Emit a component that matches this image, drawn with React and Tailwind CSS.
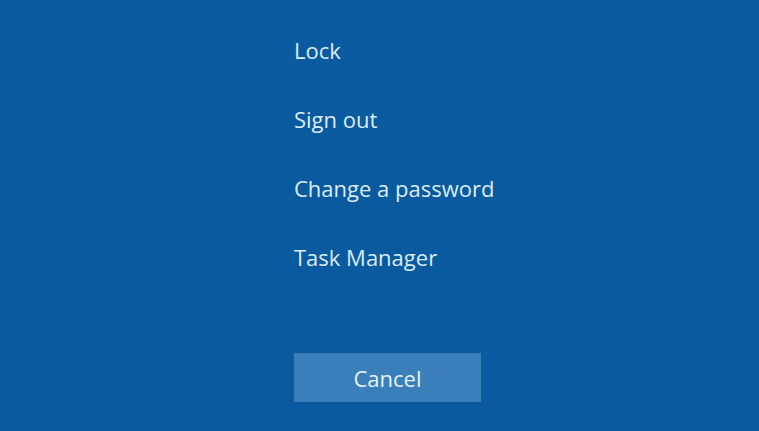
export default function App() {
  const items = ["Lock", "Sign out", "Change a password", "Task Manager"];
  return (
    <div className="w-[759px] h-[431px] bg-[#0a5aa0] overflow-hidden" style={{ fontFamily: '"Open Sans", "Noto Sans", sans-serif' }}>
      <div className="pl-[294px] pt-[15px] flex flex-col">
        {items.map((t) => (
          <div key={t} className="h-[69px] flex items-center text-[22px] text-[#dcecf9] leading-none">
            {t}
          </div>
        ))}
        <div className="mt-[62px] w-[187px] h-[49px] bg-[#3b7fba] flex items-center justify-center text-[22px] text-[#e6f2fb] leading-none">
          Cancel
        </div>
      </div>
    </div>
  );
}
